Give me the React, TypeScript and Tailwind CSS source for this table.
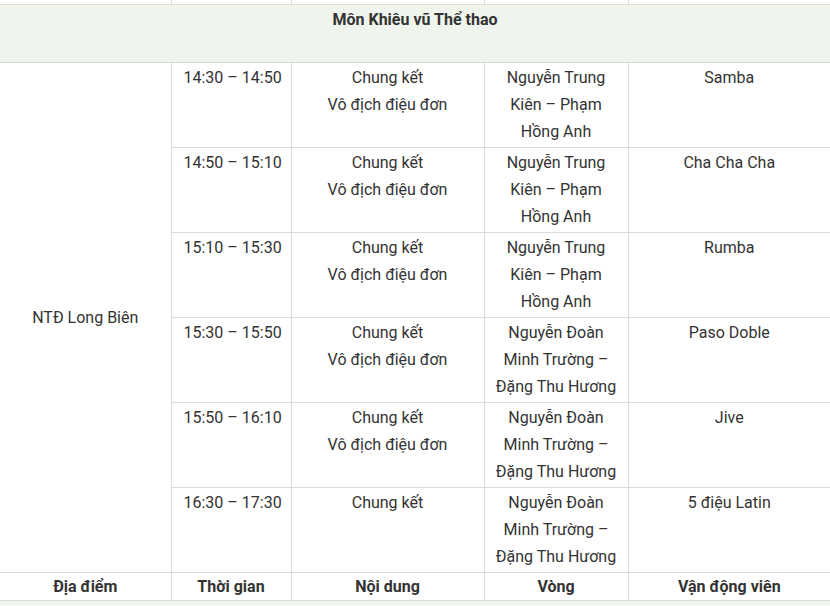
import React from "react";

type Row = { time: string; content: string[]; round: string; athlete: string };

const rows: Row[] = [
  { time: "14:30 – 14:50", content: ["Chung kết", "Vô địch điệu đơn"], round: "Nguyễn Trung Kiên – Phạm Hồng Anh", athlete: "Samba" },
  { time: "14:50 – 15:10", content: ["Chung kết", "Vô địch điệu đơn"], round: "Nguyễn Trung Kiên – Phạm Hồng Anh", athlete: "Cha Cha Cha" },
  { time: "15:10 – 15:30", content: ["Chung kết", "Vô địch điệu đơn"], round: "Nguyễn Trung Kiên – Phạm Hồng Anh", athlete: "Rumba" },
  { time: "15:30 – 15:50", content: ["Chung kết", "Vô địch điệu đơn"], round: "Nguyễn Đoàn Minh Trường – Đặng Thu Hương", athlete: "Paso Doble" },
  { time: "15:50 – 16:10", content: ["Chung kết", "Vô địch điệu đơn"], round: "Nguyễn Đoàn Minh Trường – Đặng Thu Hương", athlete: "Jive" },
  { time: "16:30 – 17:30", content: ["Chung kết"], round: "Nguyễn Đoàn Minh Trường – Đặng Thu Hương", athlete: "5 điệu Latin" },
];

const bd = "border border-[#dcdcdc]";

export default function App() {
  return (
    <div className="w-[830px] h-[606px] overflow-hidden bg-white text-[16px] leading-[27px] text-[#333]" style={{ fontFamily: "Roboto, 'Liberation Sans', sans-serif" }}>
      <table className="w-[830px] table-fixed border-collapse">
        <colgroup>
          <col className="w-[171px]" />
          <col className="w-[120px]" />
          <col className="w-[193px]" />
          <col className="w-[144px]" />
          <col className="w-[202px]" />
        </colgroup>
        <tbody>
          <tr className="h-[4px]">
            <td className={`${bd} border-t-0 border-l-0 p-0 h-[4px]`}></td>
            <td className={`${bd} border-t-0 p-0`}></td>
            <td className={`${bd} border-t-0 p-0`}></td>
            <td className={`${bd} border-t-0 p-0`}></td>
            <td className={`${bd} border-t-0 border-r-0 p-0`}></td>
          </tr>
          <tr className="bg-[#eff5ec]">
            <td colSpan={5} className={`${bd} border-x-0 text-center font-bold align-top pt-[1px] pb-[29px]`}>
              Môn Khiêu vũ Thể thao
            </td>
          </tr>
          {rows.map((r, i) => (
            <tr key={i}>
              {i === 0 && (
                <td rowSpan={6} className={`${bd} border-l-0 text-center align-middle px-3`}>
                  NTĐ Long Biên
                </td>
              )}
              <td className={`${bd} align-top pl-3 pr-2 pt-[1px] pb-[2px] h-[85px]`}>{r.time}</td>
              <td className={`${bd} align-top text-center px-3 pt-[1px] pb-[2px]`}>
                {r.content.map((c, j) => (
                  <div key={j}>{c}</div>
                ))}
              </td>
              <td className={`${bd} align-top text-center px-[10px] pt-[1px] pb-[2px]`}>{r.round}</td>
              <td className={`${bd} border-r-0 align-top text-center px-3 pt-[1px] pb-[2px]`}>{r.athlete}</td>
            </tr>
          ))}
          <tr className="font-bold">
            <td className={`${bd} border-l-0 text-center px-3 py-0`}>Địa điểm</td>
            <td className={`${bd} text-center px-3 py-0`}>Thời gian</td>
            <td className={`${bd} text-center px-3 py-0`}>Nội dung</td>
            <td className={`${bd} text-center px-3 py-0`}>Vòng</td>
            <td className={`${bd} border-r-0 text-center px-3 py-0`}>Vận động viên</td>
          </tr>
          <tr className="bg-[#eff5ec]">
            <td colSpan={5} className={`${bd} border-x-0 h-[30px]`}></td>
          </tr>
        </tbody>
      </table>
    </div>
  );
}
